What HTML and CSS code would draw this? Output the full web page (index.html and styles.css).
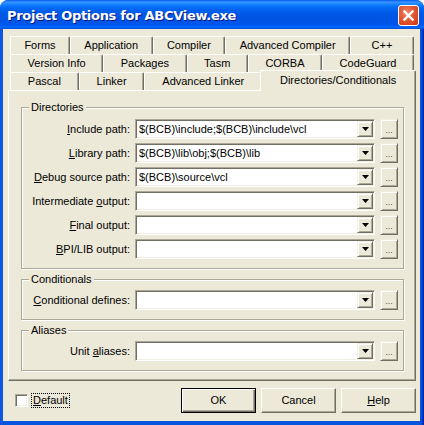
FILE: index.html
```html
<!DOCTYPE html>
<html>
<head>
<meta charset="utf-8">
<link rel="stylesheet" href="styles.css">
</head>
<body>
<div class="window">
  <div class="titlebar">
    <span class="title">Project Options for ABCView.exe</span>
    <div class="close">
      <svg width="19" height="19" viewBox="0 0 19 19"><path d="M5.5 5.5 L13.5 13.5 M13.5 5.5 L5.5 13.5" stroke="#fff" stroke-width="2.4" stroke-linecap="square"/></svg>
    </div>
  </div>
  <div class="client">
    <div class="tabs">
      <div class="tabrow">
        <div class="tab">Forms</div>
        <div class="tab">Application</div>
        <div class="tab">Compiler</div>
        <div class="tab">Advanced Compiler</div>
        <div class="tab wide">C++</div>
      </div>
      <div class="tabrow">
        <div class="tab">Version Info</div>
        <div class="tab">Packages</div>
        <div class="tab">Tasm</div>
        <div class="tab">CORBA</div>
        <div class="tab">CodeGuard</div>
      </div>
      <div class="tabrow">
        <div class="tab">Pascal</div>
        <div class="tab">Linker</div>
        <div class="tab">Advanced Linker</div>
        <div class="tab sel">Directories/Conditionals</div>
      </div>
      <div class="panel">
        <fieldset class="group dirs">
          <legend>Directories</legend>
          <div class="grid">
            <label class="lbl"><u>I</u>nclude path:</label>
            <div class="combo"><span class="val">$(BCB)\include;$(BCB)\include\vcl</span><span class="drop"><svg width="7" height="4" viewBox="0 0 7 4"><path d="M0 0H7L3.5 4Z" fill="#000"/></svg></span></div>
            <div class="btn-ell">...</div>

            <label class="lbl"><u>L</u>ibrary path:</label>
            <div class="combo"><span class="val">$(BCB)\lib\obj;$(BCB)\lib</span><span class="drop"><svg width="7" height="4" viewBox="0 0 7 4"><path d="M0 0H7L3.5 4Z" fill="#000"/></svg></span></div>
            <div class="btn-ell">...</div>

            <label class="lbl"><u>D</u>ebug source path:</label>
            <div class="combo"><span class="val">$(BCB)\source\vcl</span><span class="drop"><svg width="7" height="4" viewBox="0 0 7 4"><path d="M0 0H7L3.5 4Z" fill="#000"/></svg></span></div>
            <div class="btn-ell">...</div>

            <label class="lbl">Intermediate <u>o</u>utput:</label>
            <div class="combo"><span class="val"></span><span class="drop"><svg width="7" height="4" viewBox="0 0 7 4"><path d="M0 0H7L3.5 4Z" fill="#000"/></svg></span></div>
            <div class="btn-ell">...</div>

            <label class="lbl"><u>F</u>inal output:</label>
            <div class="combo"><span class="val"></span><span class="drop"><svg width="7" height="4" viewBox="0 0 7 4"><path d="M0 0H7L3.5 4Z" fill="#000"/></svg></span></div>
            <div class="btn-ell">...</div>

            <label class="lbl"><u>B</u>PI/LIB output:</label>
            <div class="combo"><span class="val"></span><span class="drop"><svg width="7" height="4" viewBox="0 0 7 4"><path d="M0 0H7L3.5 4Z" fill="#000"/></svg></span></div>
            <div class="btn-ell">...</div>
          </div>
        </fieldset>
        <fieldset class="group">
          <legend>Conditionals</legend>
          <div class="grid">
            <label class="lbl"><u>C</u>onditional defines:</label>
            <div class="combo"><span class="val"></span><span class="drop"><svg width="7" height="4" viewBox="0 0 7 4"><path d="M0 0H7L3.5 4Z" fill="#000"/></svg></span></div>
            <div class="btn-ell">...</div>
          </div>
        </fieldset>
        <fieldset class="group">
          <legend>Aliases</legend>
          <div class="grid">
            <label class="lbl">Unit <u>a</u>liases:</label>
            <div class="combo"><span class="val"></span><span class="drop"><svg width="7" height="4" viewBox="0 0 7 4"><path d="M0 0H7L3.5 4Z" fill="#000"/></svg></span></div>
            <div class="btn-ell">...</div>
          </div>
        </fieldset>
      </div>
    </div>
    <div class="footer">
      <div class="check"><span class="box"></span><span class="focus"><u>D</u>efault</span></div>
      <div class="buttons">
        <div class="btn def">OK</div>
        <div class="btn">Cancel</div>
        <div class="btn"><u>H</u>elp</div>
      </div>
    </div>
  </div>
</div>
</body>
</html>
```
FILE: styles.css
```css
* { box-sizing: border-box; }
html, body { margin: 0; padding: 0; background: #fff; }
body { width: 424px; height: 425px; overflow: hidden; font-family: "Liberation Sans", Arial, sans-serif; font-size: 11px; color: #000; }

.window {
  width: 424px; height: 425px;
  background: linear-gradient(to right, #0831D9 0px, #166AEE 1px, #0855DD 2px, #0855DD 421px, #0841D3 422px, #001EA0 424px);
  border-radius: 8px 8px 0 0;
  display: flex; flex-direction: column;
  overflow: hidden;
}

.titlebar {
  height: 29px;
  flex: none;
  display: flex; align-items: center; justify-content: space-between;
  padding: 0 5px 0 7px;
  background: linear-gradient(to bottom, #0058EE 0px, #3A93FF 2px, #288EFF 3px, #127DFF 5px, #036FFC 7px, #0262EE 10px, #0057E5 14px, #0054E3 19px, #0055EB 24px, #005BF5 26px, #026AFE 27px, #0062EF 28px, #0043CF 29px);
  border-radius: 8px 8px 0 0;
}
.title {
  color: #fff; font-weight: bold; font-size: 13px;
  font-family: "DejaVu Sans", "Liberation Sans", sans-serif;
  letter-spacing: -0.3px;
  text-shadow: 1px 1px 0 #0A1883;
  margin-top: 1px;
}
.close {
  width: 21px; height: 21px;
  border: 1px solid #fff; border-radius: 3px;
  background: radial-gradient(circle at 40% 35%, #F08A6C 0%, #E5603C 35%, #D5461F 75%, #B53312 100%);
  display: flex; align-items: center; justify-content: center;
  margin-top: 1px;
}

.client {
  flex: 1;
  margin: 0 4px 4px 3px;
  background: #ECE9D8;
  display: flex; flex-direction: column;
}

.tabs { margin: 7px 4px 0 5px; }
.tabrow { display: flex; height: 18px; padding: 0 2px; }
.tab {
  flex: 1 1 auto;
  padding: 0 6px;
  height: 18px;
  line-height: 17px;
  text-align: center;
  white-space: nowrap;
  border-top: 1px solid #fff;
  border-left: 1px solid #fff;
  border-right: 1px solid #716F64;
  box-shadow: inset -1px 0 0 #ACA899;
  border-radius: 2px 2px 0 0;
  background: #ECE9D8;
}
.tab.wide { min-width: 64px; }
.tab.sel {
  position: relative; z-index: 1;
  height: 21px;
  margin: -2px -2px 0 -2px;
  line-height: 18px;
  padding-left: 8px; padding-right: 8px;
}

.panel {
  height: 291px;
  border-top: 1px solid #fff;
  border-left: 1px solid #fff;
  border-right: 1px solid #716F64;
  border-bottom: 1px solid #716F64;
  box-shadow: inset -1px -1px 0 #ACA899;
  padding: 10px 11px 0 12px;
  display: flex; flex-direction: column; gap: 4px;
}

.group {
  margin: 0;
  padding: 4px 5px 9px 0;
  border: 1px solid #ACA899;
  box-shadow: inset 1px 1px 0 #fff, 1px 1px 0 #fff;
  min-width: 0;
}
.group.dirs { padding-top: 5px; }
.group legend {
  padding: 0 2px;
  margin-left: 7px;
  line-height: 13px;
  background: #ECE9D8;
}

.grid {
  display: grid;
  grid-template-columns: 108px 240px 18px;
  column-gap: 5px;
  row-gap: 4px;
  align-items: center;
}
.lbl { text-align: right; white-space: nowrap; line-height: 20px; }

.combo {
  height: 20px;
  display: flex;
  background: #fff;
  border-top: 1px solid #ACA899;
  border-left: 1px solid #ACA899;
  border-right: 1px solid #fff;
  border-bottom: 1px solid #fff;
  box-shadow: inset 1px 1px 0 #716F64, inset -1px -1px 0 #F1EFE2;
  padding: 1px;
}
.val { flex: 1; padding-left: 2px; line-height: 16px; white-space: nowrap; overflow: hidden; }
.drop {
  width: 16px; height: 16px; flex: none;
  background: #ECE9D8;
  border-top: 1px solid #F1EFE2;
  border-left: 1px solid #F1EFE2;
  border-right: 1px solid #716F64;
  border-bottom: 1px solid #716F64;
  box-shadow: inset 1px 1px 0 #fff, inset -1px -1px 0 #ACA899;
  display: flex; align-items: center; justify-content: center;
}
.btn-ell {
  height: 20px;
  background: #ECE9D8;
  border-top: 1px solid #F1EFE2;
  border-left: 1px solid #F1EFE2;
  border-right: 1px solid #716F64;
  border-bottom: 1px solid #716F64;
  box-shadow: inset 1px 1px 0 #fff, inset -1px -1px 0 #ACA899;
  text-align: center;
  font-size: 9px;
  line-height: 20px;
  color: #555;
}

.footer {
  display: flex; align-items: center; justify-content: space-between;
  padding: 7px 4px 0 12px;
}
.check { display: flex; align-items: center; gap: 4px; }
.box {
  width: 13px; height: 13px;
  background: #fff;
  border-top: 1px solid #ACA899;
  border-left: 1px solid #ACA899;
  border-right: 1px solid #fff;
  border-bottom: 1px solid #fff;
  box-shadow: inset 1px 1px 0 #716F64, inset -1px -1px 0 #F1EFE2;
}
.focus { outline: 1px dotted #000; padding: 0 1px; line-height: 13px; }

.buttons { display: flex; gap: 5px; }
.btn {
  width: 75px; height: 25px;
  background: #ECE9D8;
  border-top: 1px solid #fff;
  border-left: 1px solid #fff;
  border-right: 1px solid #716F64;
  border-bottom: 1px solid #716F64;
  box-shadow: inset -1px -1px 0 #ACA899;
  text-align: center;
  line-height: 22px;
}
.btn.def {
  border: 1px solid #000;
  box-shadow: inset 1px 1px 0 #fff, inset -1px -1px 0 #716F64, inset -2px -2px 0 #ACA899;
}
```
